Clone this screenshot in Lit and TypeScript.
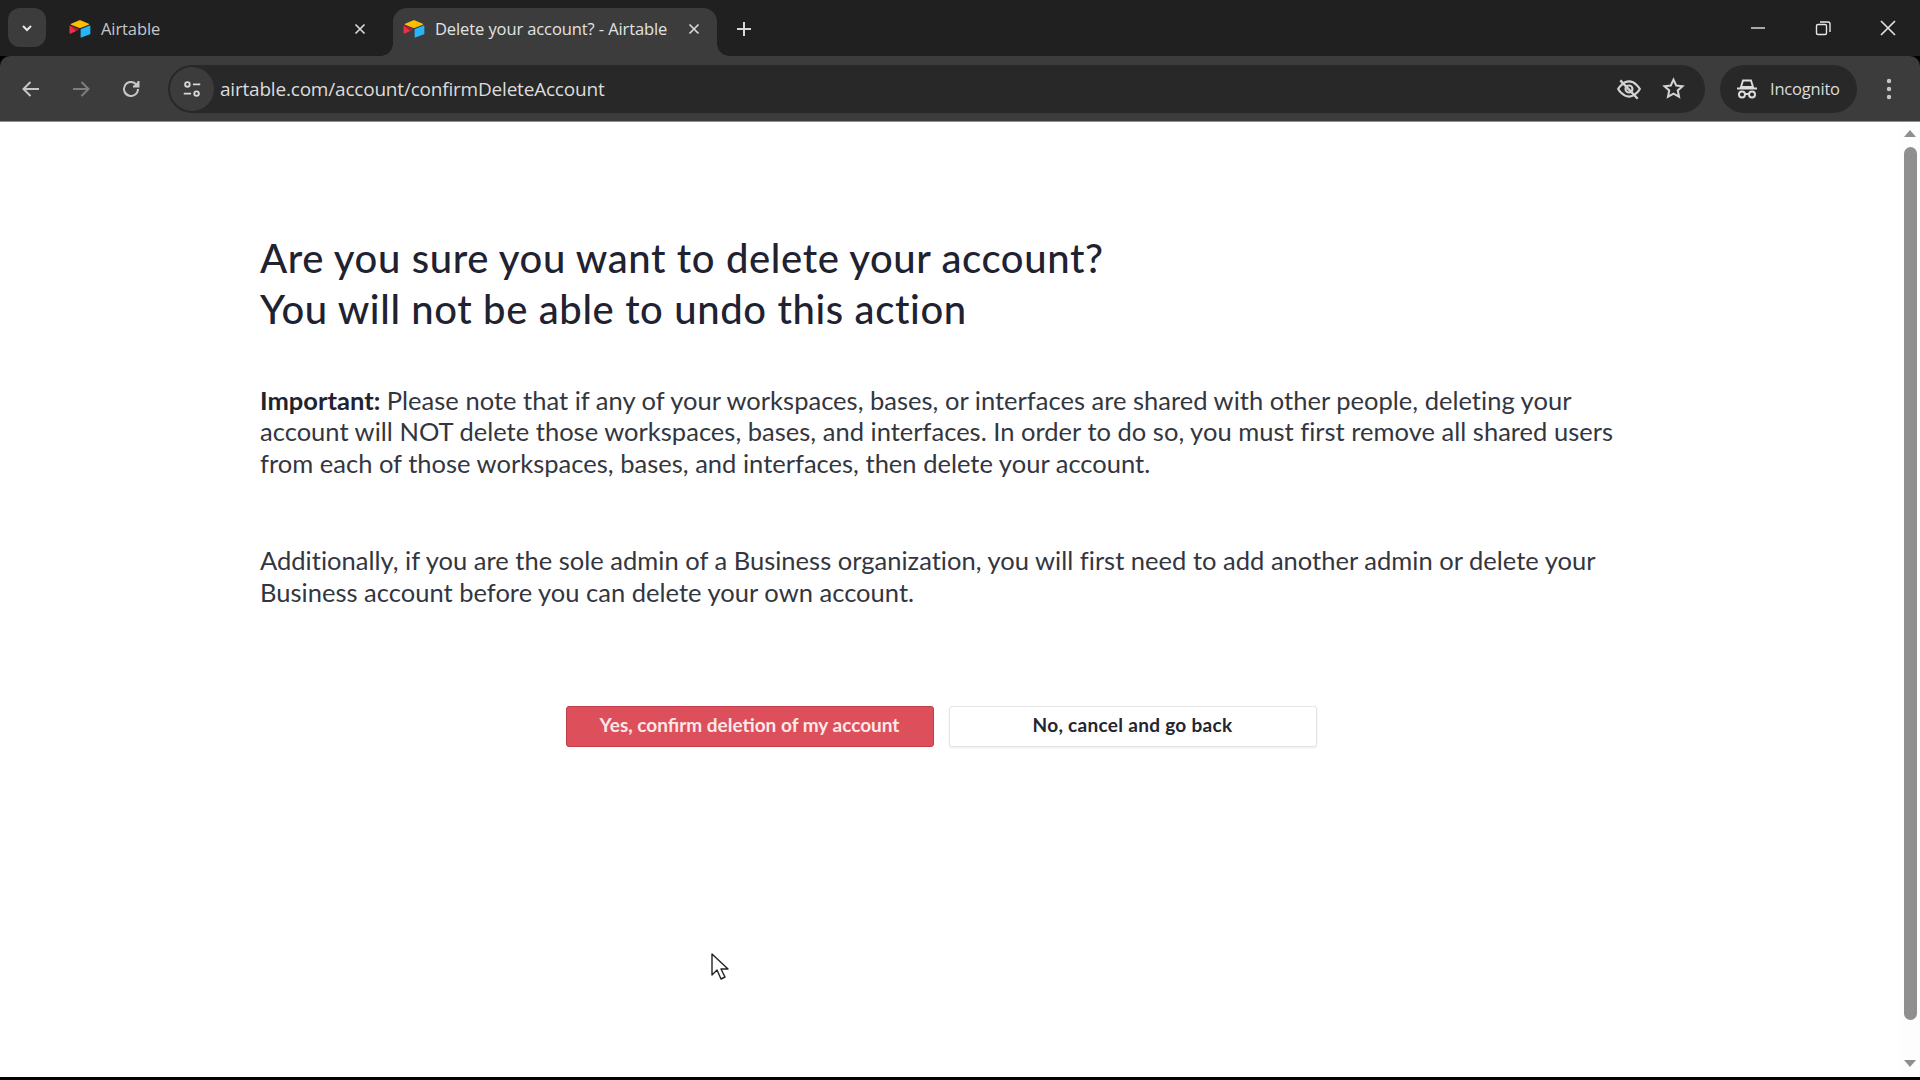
import { LitElement, html, css, svg } from "lit";
import { customElement } from "lit/decorators.js";

const logo = html`<svg class="logo" viewBox="0 0 200 170"><path fill="#FFBF00" d="M90.04 12.37 24.08 39.66c-3.67 1.52-3.63 6.73.06 8.19l66.24 26.27c5.82 2.31 12.3 2.31 18.12 0l66.23-26.27c3.69-1.46 3.73-6.67.06-8.19L108.83 12.37c-6.02-2.49-12.78-2.49-18.79 0"/><path fill="#26B5F8" d="M105.31 88.46v65.62c0 3.12 3.15 5.26 6.05 4.11l73.81-28.65c1.68-.67 2.79-2.3 2.79-4.11V59.81c0-3.12-3.15-5.26-6.05-4.11l-73.81 28.65c-1.68.67-2.79 2.3-2.79 4.11"/><path fill="#ED3049" d="M88.08 91.85 66.17 102.42l-2.22 1.08-46.24 22.15c-2.93 1.41-6.67-.72-6.67-3.98V60.09c0-1.18.6-2.2 1.41-2.96.34-.34.72-.62 1.12-.84 1.11-.66 2.68-.84 4.02-.31l70.12 27.78c3.56 1.41 3.84 6.41.37 8.09"/><path fill="#000" opacity=".3" d="M88.08 91.85 66.17 102.42 12.45 57.13c.34-.34.72-.62 1.12-.84 1.11-.66 2.68-.84 4.02-.31l70.12 27.78c3.56 1.41 3.84 6.41.37 8.09"/></svg>`;

const closeIcon = html`<svg class="x" viewBox="0 0 16 16"><path d="M3.5 3.5l9 9M12.5 3.5l-9 9" fill="none" stroke="currentColor" stroke-width="1.7"/></svg>`;

const ico = (w: number, color: string, body: unknown) =>
  html`<svg width=${w} height=${w} viewBox="0 0 24 24" fill="none" stroke=${color} stroke-width="2" style="color:${color}">${body}</svg>`;

@customElement("app-root")
export class AppRoot extends LitElement {
  static styles = css`
    :host { display: block; width: 1920px; height: 1080px; overflow: hidden; background: #000; position: relative; font-family: "Open Sans", "Noto Sans", sans-serif; }
    .strip { height: 56px; background: #202020; display: flex; align-items: flex-end; padding-left: 8px; color: #c7c7c7; font-size: 16.5px; box-sizing: border-box; }
    .tabsearch { width: 38px; height: 39px; margin-bottom: 9px; border-radius: 12px; background: #3c3c3c; display: flex; align-items: center; justify-content: center; }
    .tab { height: 48px; display: flex; align-items: center; box-sizing: border-box; padding-bottom: 7px; position: relative; }
    .tab.one { width: 347px; padding-left: 22px; }
    .tab.two { width: 324px; padding-left: 9px; background: #3c3c3c; border-radius: 14px 14px 0 0; color: #e3e3e3; }
    .tab.two::before, .tab.two::after { content: ""; position: absolute; bottom: 0; width: 12px; height: 12px; background: radial-gradient(circle at 0 0, #202020 11.5px, #3c3c3c 12px); }
    .tab.two::before { left: -12px; }
    .tab.two::after { right: -12px; transform: scaleX(-1); }
    .logo { width: 24px; height: 20px; flex: none; margin-right: 9px; }
    .title { flex: 1; white-space: nowrap; letter-spacing: -0.1px; }
    .x { width: 16px; height: 16px; flex: none; margin-right: 15px; color: #d8d8d8; }
    .tab.one .x { margin-right: 25px; }
    .plus { margin: 0 0 17px 17px; width: 20px; height: 20px; color: #d8d8d8; }
    .spacer { flex: 1; }
    .winctl { display: flex; align-items: center; height: 56px; padding-right: 22px; gap: 45px; color: #e6e6e6; }
    .winctl svg { width: 20px; height: 20px; display: block; }
    .bar { height: 66px; background: #3c3c3c; border-top-left-radius: 10px; border-top-right-radius: 10px; display: flex; align-items: center; box-sizing: border-box; padding: 0 0 0 19px; color: #c7c7c7; border-bottom: 1px solid #8f8f8f; }
    .nav { display: flex; gap: 26px; align-items: center; width: 149px; flex: none; }
    .nav svg { display: block; flex: none; }
    .omni { width: 1537px; height: 48px; box-sizing: border-box; background: #282828; border-radius: 24px; display: flex; align-items: center; padding: 0 19px 0 2px; flex: none; }
    .chip { width: 44px; height: 44px; border-radius: 50%; background: #3c3c3c; display: flex; align-items: center; justify-content: center; flex: none; margin-right: 6px; }
    .url { flex: 1; font-size: 19px; color: #dcdcdc; letter-spacing: -0.2px; white-space: nowrap; }
    .omni .r { display: flex; align-items: center; gap: 19px; }
    .pill { margin-left: 15px; width: 137px; height: 48px; border-radius: 24px; background: #282828; display: flex; align-items: center; box-sizing: border-box; padding-left: 15px; gap: 11px; font-size: 16.5px; letter-spacing: -0.2px; color: #dcdcdc; flex: none; }
    .dots { margin-left: 29px; display: block; flex: none; }
    .page { height: 955px; background: #fff; display: flex; }
    .content { flex: 1; padding: 111px 0 0 260px; box-sizing: border-box; color: #1f2230; }
    h1 { margin: 0 0 50px; font: 500 40px/51px Lato, sans-serif; letter-spacing: 0.62px; white-space: nowrap; }
    p { margin: 0 0 66px; font: 400 25.5px/31.4px Lato, sans-serif; letter-spacing: 0.02px; color: #333640; white-space: nowrap; }
    p b { font-weight: 700; color: #1f2230; }
    .actions { width: 1362px; display: flex; justify-content: center; gap: 15px; margin-top: 98px; }
    .btn { width: 368px; height: 41px; border-radius: 3px; box-sizing: border-box; display: flex; align-items: center; justify-content: center; font: 700 19px Lato, sans-serif; padding-bottom: 5px; }
    .btn.yes { background: #dd4f5a; color: #fbe8e9; border: 1px solid #bf3e49; }
    .btn.no { background: #fff; color: #23262f; border: 1px solid #e4e4e4; box-shadow: 0 1px 2px rgba(0,0,0,.08); letter-spacing: 0.3px; }
    .scroll { width: 20px; flex: none; background: #fdfdfd; display: flex; flex-direction: column; align-items: center; padding: 8px 0 6px; box-sizing: border-box; }
    .tri { width: 0; height: 0; border-left: 6px solid transparent; border-right: 6px solid transparent; }
    .tri.up { border-bottom: 7px solid #8f8f8f; }
    .tri.down { border-top: 7px solid #8f8f8f; }
    .thumb { width: 13px; height: 873px; margin: 10px 0 40px; background: #8f8f8f; border-radius: 7px; flex: none; }
    .cursor { position: absolute; left: 710px; top: 952px; width: 20px; height: 30px; }
  `;

  render() {
    return html`
      <div class="strip">
        <div class="tabsearch">
          <svg width="14" height="14" viewBox="0 0 14 14"><path d="M3 5l4 4 4-4" fill="none" stroke="#e8e8e8" stroke-width="2"/></svg>
        </div>
        <div class="tab one">${logo}<span class="title">Airtable</span>${closeIcon}</div>
        <div class="tab two">${logo}<span class="title">Delete your account? - Airtable</span>${closeIcon}</div>
        <svg class="plus" viewBox="0 0 20 20"><path d="M10 3v14M3 10h14" stroke="currentColor" stroke-width="2" fill="none"/></svg>
        <div class="spacer"></div>
        <div class="winctl">
          <svg viewBox="0 0 20 20"><path d="M3 10h14" stroke="currentColor" stroke-width="1.4" fill="none"/></svg>
          <svg viewBox="0 0 20 20" fill="none" stroke="currentColor" stroke-width="1.4"><rect x="3.5" y="6.5" width="10" height="10" rx="1.5"/><path d="M7 4h8a2 2 0 0 1 2 2v8"/></svg>
          <svg viewBox="0 0 20 20"><path d="M3 3l14 14M17 3L3 17" stroke="currentColor" stroke-width="1.6" fill="none"/></svg>
        </div>
      </div>
      <div class="bar">
        <div class="nav">
          ${ico(24, "#c7c7c7", svg`<path d="M20 12H5M11.5 5L4.5 12l7 7"/>`)}
          ${ico(24, "#7e7e7e", svg`<path d="M4 12h15M12.5 5l7 7-7 7"/>`)}
          ${ico(24, "#c7c7c7", svg`<path d="M19 12a7 7 0 1 1-2.2-5.1L19 9"/><path d="M19.5 4v5.5H14" fill="#c7c7c7" stroke="none"/><path d="M19.5 4v5.5H14"/>`)}
        </div>
        <div class="omni">
          <div class="chip">
            ${ico(22, "#d8d8d8", svg`<circle cx="7" cy="7" r="2.5"/><path d="M13 7h8M3 17h8"/><circle cx="17" cy="17" r="2.5"/>`)}
          </div>
          <span class="url">airtable.com/account/confirmDeleteAccount</span>
          <div class="r">
            ${ico(26, "#d2d2d2", svg`<path d="M2 12s4-7 10-7 10 7 10 7-4 7-10 7-10-7-10-7z"/><circle cx="12" cy="12" r="3.2"/><path d="M4 4l16 17" stroke-width="2.2"/>`)}
            ${ico(25, "#d2d2d2", svg`<path d="M12 3.5l2.6 5.6 6 .7-4.5 4.1 1.2 6L12 17l-5.3 2.9 1.2-6-4.5-4.1 6-.7z"/>`)}
          </div>
        </div>
        <div class="pill">
          ${ico(24, "#dcdcdc", svg`<path d="M8 3.5h8l2 6.5H6z" fill="none" stroke-width="1.9"/><path d="M2 11.5h20" /><circle cx="7" cy="17.5" r="3"/><circle cx="17" cy="17.5" r="3"/><path d="M10 17h4"/>`)}
          <span>Incognito</span>
        </div>
        <svg class="dots" width="6" height="22" viewBox="0 0 6 22"><circle cx="3" cy="3" r="2.2" fill="#c7c7c7"/><circle cx="3" cy="11" r="2.2" fill="#c7c7c7"/><circle cx="3" cy="19" r="2.2" fill="#c7c7c7"/></svg>
      </div>
      <div class="page">
        <div class="content">
          <h1>Are you sure you want to delete your account?<br />You will not be able to undo this action</h1>
          <p><b>Important:</b> Please note that if any of your workspaces, bases, or interfaces are shared with other people, deleting your<br />account will NOT delete those workspaces, bases, and interfaces. In order to do so, you must first remove all shared users<br />from each of those workspaces, bases, and interfaces, then delete your account.</p>
          <p>Additionally, if you are the sole admin of a Business organization, you will first need to add another admin or delete your<br />Business account before you can delete your own account.</p>
          <div class="actions">
            <div class="btn yes">Yes, confirm deletion of my account</div>
            <div class="btn no">No, cancel and go back</div>
          </div>
        </div>
        <div class="scroll">
          <div class="tri up"></div>
          <div class="thumb"></div>
          <div class="tri down"></div>
        </div>
      </div>
      <svg class="cursor" viewBox="0 0 20 30"><path d="M2 2v21l5-5 4 9 4-2-4-8h7z" fill="#fff" stroke="#222" stroke-width="1.4" stroke-linejoin="round"/></svg>
    `;
  }
}
